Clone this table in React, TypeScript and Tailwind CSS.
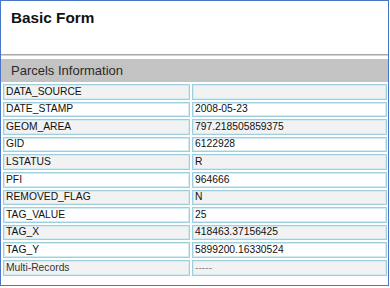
import React from "react";

const rows: [string, string][] = [
  ["DATA_SOURCE", ""],
  ["DATE_STAMP", "2008-05-23"],
  ["GEOM_AREA", "797.218505859375"],
  ["GID", "6122928"],
  ["LSTATUS", "R"],
  ["PFI", "964666"],
  ["REMOVED_FLAG", "N"],
  ["TAG_VALUE", "25"],
  ["TAG_X", "418463.37156425"],
  ["TAG_Y", "5899200.16330524"],
  ["Multi-Records", "-----"],
];

export default function App() {
  return (
    <div className="w-[389px] h-[286px] border border-[#4a76c6] bg-white font-['Liberation_Sans',Arial,sans-serif] flex flex-col">
      <div className="h-[53px] pl-[10px] pt-[8px] text-[15.3px] leading-[18px] font-bold text-[#111]">
        Basic Form
      </div>
      <div className="h-[2px] bg-[#a8a8a8] border-b border-[#d4d4d4]" />
      <div className="h-[3px]" />
      <div className="h-[23px] bg-[#c3c3c3] pl-[10px] flex items-center text-[13px] text-[#2a2a2a]">
        Parcels Information
      </div>
      <div className="mt-[2px] pl-[2px] grid grid-cols-[187px_195px] gap-x-[2px] gap-y-[2px] auto-rows-[15.6px]">
        {rows.map(([k, v], i) => {
          const bg = i % 2 === 0 ? "bg-[#f2f2f2]" : "bg-white";
          return (
            <React.Fragment key={k}>
              <div
                className={`${bg} border border-[#9fcfdf] shadow-[inset_0_0_0_1px_#d3ebf2] pl-[2px] flex items-center leading-none text-[10.3px] ${k === "Multi-Records" ? "text-[#333]" : "text-[#111]"}`}
              >
                {k}
              </div>
              <div
                className={`${bg} border border-[#9fcfdf] shadow-[inset_0_0_0_1px_#d3ebf2] pl-[2px] flex items-center text-[10.3px] leading-none ${v === "-----" ? "text-[#888]" : "text-[#111]"}`}
              >
                {v}
              </div>
            </React.Fragment>
          );
        })}
      </div>
    </div>
  );
}
